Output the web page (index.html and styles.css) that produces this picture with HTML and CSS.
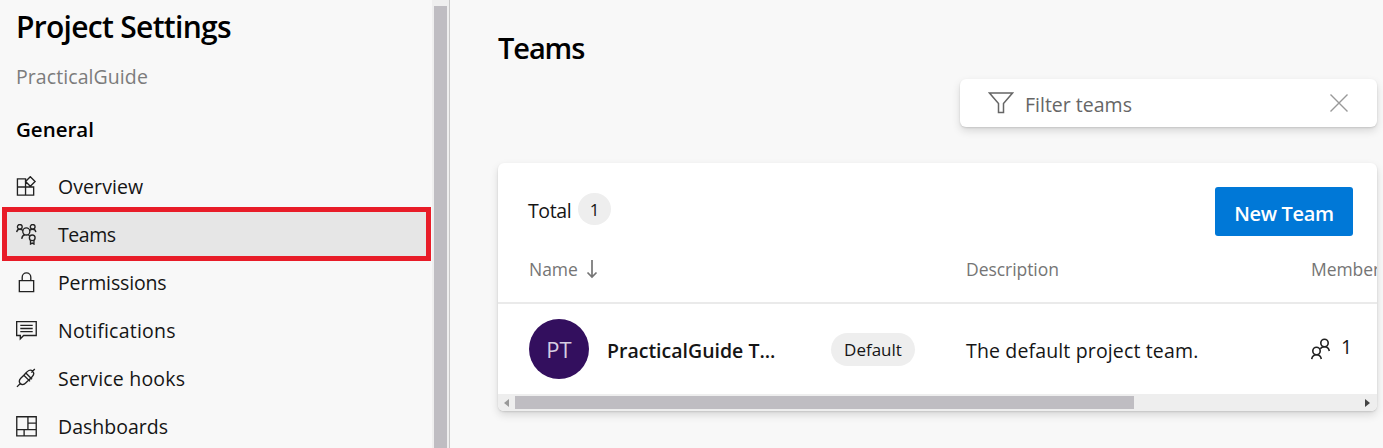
FILE: index.html
```html
<!DOCTYPE html>
<html lang="en">
<head>
<meta charset="utf-8">
<title>Project Settings - Teams</title>
<link rel="stylesheet" href="styles.css">
</head>
<body>
<div class="app">
  <aside class="sidebar">
    <div class="sidebar-content">
      <h1 class="title"><span>Project Settings</span></h1>
      <div class="project"><span>PracticalGuide</span></div>
      <h2 class="group"><span>General</span></h2>
      <nav class="nav">
        <a class="item"><svg class="icon" viewBox="0 0 22 22"><path d="M1.500 3h8.500v17h-8.500zM1.500 11.500h17v8.500h-17M10 11.500V3M15 .7l5 5-5 5-5-5z"/></svg><span class="w-overview">Overview</span></a>
        <a class="item selected"><svg class="icon" viewBox="0 0 22 22"><circle cx="4" cy="3" r="2.500"/><circle cx="17.500" cy="3" r="2.500"/><circle cx="10.800" cy="7.800" r="3.700"/><path d="M.7 8.500c.3-2 1.500-3 3.300-3 1.600 0 2.600.6 3.300 1.500M14 7c.8-1 2-1.500 3.500-1.500 1.800 0 3 1 3.300 3M6 15.500c.3-2.500 1.500-4 3.500-4.500M12.500 11l1.800 1.300"/><circle cx="17" cy="14.500" r="3"/><path d="M15.200 17v4l1.800-1 1.800 1v-4"/></svg><span class="w-teams">Teams</span></a>
        <a class="item"><svg class="icon" viewBox="0 0 22 22"><path d="M3.500 9h15v11.500h-15zM6.500 9V5.500a4.500 4.500 0 0 1 9 0V9"/></svg><span class="w-permissions">Permissions</span></a>
        <a class="item"><svg class="icon" viewBox="0 0 22 22"><path d="M.7 1.700h20.500v14.500H8L4.500 19.700v-3.500H.7zM4.500 5.700h13M4.500 8.900h13M4.500 12.100h13"/></svg><span class="w-notifications">Notifications</span></a>
        <a class="item"><svg class="icon" viewBox="0 0 22 22"><path d="M1 19.800l3.800-3.800M16 4.800L19.700 1M8.200 7.500l6.500 6.500M10.300 5.300l6.500 6.500M8.200 7.500L5 10.700C3 12.800 3.200 14.800 4.500 16.300s3.700 1.400 5.600-.5l4.600-4.600M10.300 5.300l1.500-1.500c2-1.800 4.200-1.800 5.600-.4s1.500 3.600-.3 5.500L14 12.500M7 9l3.300-3.700"/></svg><span class="w-hooks">Service hooks</span></a>
        <a class="item"><svg class="icon" viewBox="0 0 22 22"><path d="M.8 .8h20.400v20H.8zM12.500 .8v13.500M.8 14.300h20.400M12.500 7.500h8.700M8.500 14.300v6.500"/></svg><span class="w-dashboards">Dashboards</span></a>
      </nav>
    </div>
    <div class="vtrack"><div class="vthumb"></div></div>
  </aside>
  <main class="main">
    <h2 class="page-title"><span>Teams</span></h2>
    <div class="filter">
      <svg class="funnel" viewBox="0 0 26 24"><path d="M1.500 2h23L15.500 12.500v9h-5v-9z"/></svg>
      <span class="filter-text">Filter teams</span>
      <svg class="clear" viewBox="0 0 20 20"><path d="M1.500 1.500l17 17M18.500 1.500l-17 17"/></svg>
    </div>
    <section class="card">
      <div class="card-head">
        <span class="total">Total</span><span class="count">1</span>
        <button class="new-team"><span>New Team</span></button>
      </div>
      <div class="row columns">
        <div class="name-col"><span class="col-name">Name</span><svg class="sort" viewBox="0 0 12 20"><path d="M6 1v17M1.500 13.500L6 18l4.500-4.500"/></svg></div>
        <div class="desc-col"><span class="col-desc">Description</span></div>
        <div class="member-col"><span class="col-members">Members</span></div>
      </div>
      <div class="row team">
        <div class="name-col"><span class="avatar">PT</span><span class="team-name">PracticalGuide T...</span><span class="pill"><span>Default</span></span></div>
        <div class="desc-col"><span class="description">The default project team.</span></div>
        <div class="member-col"><svg class="people" viewBox="0 0 20 22"><circle cx="13.500" cy="5" r="3.700"/><circle cx="5.500" cy="13" r="3.700"/><path d="M.7 21c.5-2.800 2.200-4.300 4.800-4.300s4.300 1.500 4.800 4.300M9.200 10.700c1-1.300 2.400-2 4.300-2 2.600 0 4.300 1.500 4.800 4.300"/></svg><span class="member-count">1</span></div>
      </div>
      <div class="htrack"><i class="arrow left"></i><div class="hthumb"></div><i class="arrow right"></i></div>
    </section>
  </main>
</div>
</body>
</html>
```
FILE: styles.css
```css
* { box-sizing: border-box; }
body { margin: 0; background: #f8f8f8; color: #151515; font-family: "Open Sans", "Noto Sans", sans-serif; font-size: 19.5px; overflow: hidden; }
h1, h2 { margin: 0; color: #000; font-weight: 600; }
span { white-space: nowrap; }
svg { fill: none; stroke: #222; flex: none; }
.app { display: flex; height: 448px; }
.sidebar { display: flex; width: 450px; border-right: 1px solid #c8c8c8; }
.sidebar-content { width: 432px; }
.title { height: 53px; padding-left: 16px; font-size: 30px; line-height: 53px; letter-spacing: -.7px; }
.project { height: 48px; padding-left: 16px; line-height: 48px; letter-spacing: .08px; color: #7c7c7c; }
.group { height: 61px; padding-left: 16px; font-size: 20.5px; line-height: 56px; }
.item { display: flex; align-items: center; gap: 21px; height: 48px; padding-left: 16px; }
.icon { width: 21px; height: 21px; stroke-width: 1.4; }
.selected { height: 54px; margin: -3px 1px -3px 2px; padding-left: 9px; border: 5px solid #e81c28; background: #e6e6e6; }
.w-overview { letter-spacing: .08px; }
.w-teams { letter-spacing: -.45px; }
.w-permissions { letter-spacing: -.15px; }
.w-notifications { letter-spacing: .22px; }
.w-hooks { letter-spacing: .2px; }
.vtrack { width: 17px; height: 448px; padding: 6px 2px 0; background: #efefef; }
.vthumb { height: 442px; background: #bfbdc2; }
.main { width: 933px; padding: 22px 6px 0 48px; }
.page-title { height: 57px; font-size: 29px; line-height: 52px; letter-spacing: -1.1px; }
.filter { display: flex; align-items: center; width: 417px; height: 48px; margin-left: auto; padding: 0 28px 0 28px; border-radius: 6px; background: #fff; color: #666; box-shadow: 0 4px 8px rgba(0,0,0,.13), 0 1px 2px rgba(0,0,0,.12); }
.filter-text { padding-top: 2px; }
.funnel { width: 26px; height: 24px; margin-right: 11px; stroke: #666; stroke-width: 1.5; }
.clear { width: 20px; height: 20px; margin-left: auto; stroke: #999; stroke-width: 1.4; }
.card { height: 248px; margin-top: 36px; border-radius: 6px; background: #fff; box-shadow: 0 4px 9px rgba(0,0,0,.13), 0 1px 2px rgba(0,0,0,.12); overflow: hidden; }
.card-head { display: flex; align-items: flex-start; height: 73px; padding: 24px 24px 0 30px; }
.total { line-height: 48px; letter-spacing: -.4px; }
.count { width: 33px; height: 32px; margin: 6px 0 0 7px; border-radius: 16px; background: #eee; font-size: 17px; line-height: 33px; text-align: center; font-weight: 500; }
.new-team { height: 49px; width: 138px; margin-left: auto; padding: 4px 0 0; border: 0; border-radius: 3px; background: #0078d7; color: #fff; font: 600 20px "Open Sans", sans-serif; letter-spacing: -.35px; }
.row { display: grid; grid-template-columns: 437px 345px 120px; padding-left: 31px; }
.row > div { display: flex; align-items: center; }
.columns { height: 68px; border-bottom: 2px solid #eaeaea; color: #757575; font-size: 17.5px; font-weight: 500; letter-spacing: -.05px; }
.team { height: 90px; }
.sort { width: 12px; height: 20px; margin-left: 8px; stroke: #757575; stroke-width: 1.7; }
.avatar { width: 60px; height: 60px; border-radius: 50%; background: #330f5e; color: #d6cde2; font-size: 22px; line-height: 60px; text-align: center; }
.team-name { width: 224px; margin-left: 18px; padding-top: 2px; font-weight: 600; }
.pill { width: 84px; height: 33px; border-radius: 17px; background: #eee; font-size: 17px; line-height: 33px; text-align: center; }
.description { padding-top: 2px; letter-spacing: .15px; }
.people { width: 20px; height: 22px; stroke-width: 1.6; }
.member-count { margin: -6px 0 0 10px; }
.htrack { display: flex; align-items: center; height: 17px; padding: 0 7px 0 6px; background: #eee; }
.hthumb { width: 619px; height: 13px; margin-left: 6px; background: #bfbdc2; }
.arrow { width: 0; height: 0; border: 4px solid transparent; }
.left { border-left: 0; border-right: 5px solid #999; }
.right { margin-left: auto; border-right: 0; border-left: 5px solid #444; }
```
